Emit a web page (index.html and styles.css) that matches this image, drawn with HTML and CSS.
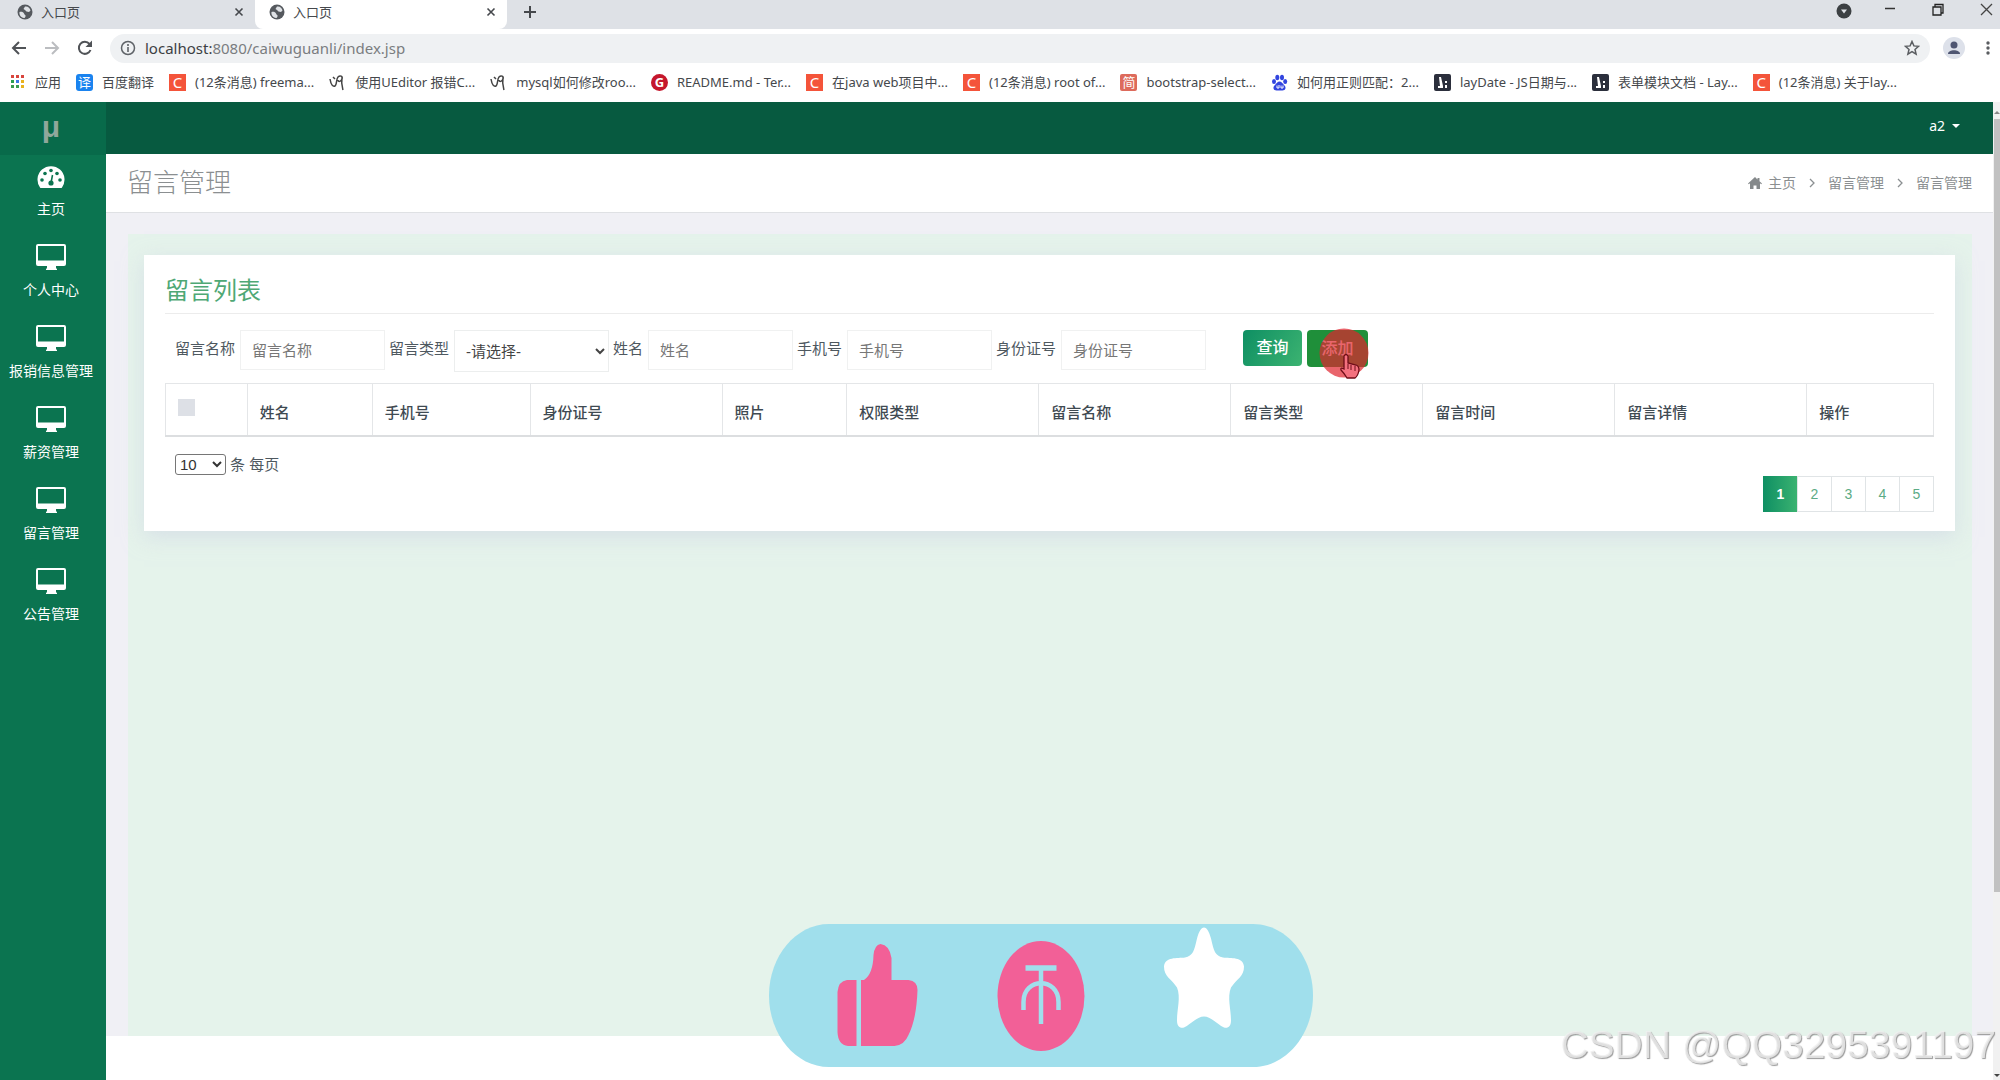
FILE: index.html
```html
<!DOCTYPE html>
<html lang="zh-CN">
<head>
<meta charset="utf-8">
<title>入口页</title>
<link rel="stylesheet" href="styles.css">
</head>
<body>
<svg class="defs" aria-hidden="true">
  <symbol id="globe" viewBox="0 0 16 16"><circle cx="8" cy="8" r="7.500" fill="#55595e"/><path d="M2.500 8c2-.5 4 0 4.500 1.500S9 11 8.500 12.500 7.500 14 7 14C4 13.500 2 11 2.500 8zM8 2.500c3-.5 5 1.500 5.500 4L12 8l-2.500-.5L8 6 6.500 5z" fill="#dfe2e6"/></symbol>
  <symbol id="close" viewBox="0 0 10 10"><path d="M1.500 1.500l7 7m0-7l-7 7" stroke="#45484c" stroke-width="1.600" fill="none"/></symbol>
  <symbol id="script" viewBox="0 0 17 17"><path d="M1 5c1 6 3 8 5 7s1-7 3-9 5-1 4 2-4 3-4 1m4-2c-1 5 0 8 1 12M4 3l2 2" stroke="#444" stroke-width="1.500" fill="none"/></symbol>
  <symbol id="monitor" viewBox="0 0 30 26"><path fill-rule="evenodd" d="M2 0h26a2 2 0 0 1 2 2v18a2 2 0 0 1-2 2h-8v1.500a2 2 0 0 0 1 1.500v1H10v-1a2 2 0 0 0 1-1.500V22H2a2 2 0 0 1-2-2V2a2 2 0 0 1 2-2zm0 2v14.500h26V2z" fill="currentColor"/></symbol>
</svg>
<div class="window">
  <header class="chrome">
    <div class="tabs">
      <div class="tab"><svg class="fav"><use href="#globe"/></svg><span>入口页</span><button class="bare" aria-label="关闭"><svg class="x"><use href="#close"/></svg></button></div>
      <div class="tab tab-on"><svg class="fav"><use href="#globe"/></svg><span>入口页</span><button class="bare" aria-label="关闭"><svg class="x"><use href="#close"/></svg></button></div>
      <button class="bare plus" aria-label="新标签页"><svg width="14" height="14"><path d="M7 1v12M1 7h12" stroke="#45484c" stroke-width="2"/></svg></button>
      <div class="winctl">
        <button class="bare search" aria-label="搜索标签页"><svg width="16" height="16"><circle cx="8" cy="8" r="7.500" fill="#3c4043"/><path d="M5 6.500h6L8 10.500z" fill="#dee1e6"/></svg></button>
        <button class="bare" aria-label="最小化"><svg width="12" height="12"><path d="M1 5.500h10" stroke="#333" stroke-width="1.500"/></svg></button>
        <button class="bare" aria-label="还原"><svg width="12" height="14" fill="none" stroke="#222" stroke-width="1.300"><path d="M1 4h8v8H1zM3 4V1.500h8V10H9"/></svg></button>
        <button class="bare" aria-label="关闭窗口"><svg width="13" height="13"><path d="M1 1l11 11m0-11L1 12" stroke="#444" stroke-width="1.300"/></svg></button>
      </div>
    </div>
    <div class="toolbar">
      <button class="bare" aria-label="后退"><svg width="16" height="16" fill="none" stroke="#505357" stroke-width="2"><path d="M15 8H2m6-6L2 8l6 6"/></svg></button>
      <button class="bare" aria-label="前进"><svg width="16" height="16" fill="none" stroke="#bbbdc0" stroke-width="2"><path d="M1 8h13M8 2l6 6-6 6"/></svg></button>
      <button class="bare" aria-label="刷新"><svg width="16" height="16"><path d="M13.500 10A6 6 0 1 1 12.500 4" fill="none" stroke="#505357" stroke-width="2"/><path d="M15 .500v6.500H8.500z" fill="#505357"/></svg></button>
      <div class="omnibox">
        <svg width="16" height="16"><circle cx="8" cy="8" r="6.500" fill="none" stroke="#5f6368" stroke-width="1.500"/><path d="M8 7v5M8 4v2" stroke="#5f6368" stroke-width="1.600"/></svg>
        <div class="url"><b>localhost:</b>8080/caiwuguanli/index.jsp</div>
        <svg width="16" height="16"><path d="M8 1.500l1.900 4.400 4.700.4-3.600 3.100 1.100 4.700L8 11.600l-4.100 2.500L5 9.400 1.400 6.300l4.700-.4z" fill="none" stroke="#5a5d61" stroke-width="1.500"/></svg>
      </div>
      <button class="bare avatar" aria-label="用户"><svg width="22" height="22"><circle cx="11" cy="11" r="11" fill="#dde1ea"/><circle cx="11" cy="8" r="3.500" fill="#4f5672"/><path d="M5 17c0-5 12-5 12 0z" fill="#4f5672"/></svg></button>
      <button class="bare" aria-label="菜单"><svg width="4" height="16" fill="#5a5d61"><circle cx="2" cy="3" r="1.700"/><circle cx="2" cy="8" r="1.700"/><circle cx="2" cy="13" r="1.700"/></svg></button>
    </div>
    <nav class="bookmarks" aria-label="书签">
      <a href="#" class="mark"><svg width="16" height="16"><g fill="#d9453d"><path d="M1 1h3v3H1zM6 1h3v3H6zM11 1h3v3h-3z"/></g><path d="M1 6h3v3H1z" fill="#2e9e50"/><path d="M6 6h3v3H6z" fill="#3b78e7"/><path d="M11 6h3v3h-3z" fill="#e8b21d"/><path d="M1 11h3v3H1zM6 11h3v3H6z" fill="#3a9b50"/><path d="M11 11h3v3h-3z" fill="#e8b21d"/></svg>应用</a>
      <a href="#" class="mark"><i class="ico blue">译</i><span>百度翻译</span></a>
      <a href="#" class="mark"><i class="ico orange">C</i><span>(12条消息) freema...</span></a>
      <a href="#" class="mark"><svg class="ico"><use href="#script"/></svg><span>使用UEditor 报错C...</span></a>
      <a href="#" class="mark"><svg class="ico"><use href="#script"/></svg><span>mysql如何修改roo...</span></a>
      <a href="#" class="mark"><i class="ico red">G</i><span>README.md - Ter...</span></a>
      <a href="#" class="mark"><i class="ico orange">C</i><span>在java web项目中...</span></a>
      <a href="#" class="mark"><i class="ico orange">C</i><span>(12条消息) root of...</span></a>
      <a href="#" class="mark"><i class="ico brick">简</i><span>bootstrap-select...</span></a>
      <a href="#" class="mark"><svg class="ico" viewBox="0 0 17 17" fill="#3245df"><ellipse cx="3" cy="7.500" rx="2" ry="2.500"/><ellipse cx="6.300" cy="3.500" rx="2" ry="2.800"/><ellipse cx="11" cy="3.500" rx="2" ry="2.800"/><ellipse cx="14.200" cy="7.500" rx="2" ry="2.500"/><path d="M8.500 7.500c2 0 3 2 5 4s1 5-2 5H5.500c-3 0-4-3-2-5s3-4 5-4z"/><path d="M6 11.500v2.500h2v-3m2 .5V14h2v-2.500" stroke="#fff" fill="none"/></svg><span>如何用正则匹配：2...</span></a>
      <a href="#" class="mark"><svg class="ico" viewBox="0 0 17 17"><rect width="17" height="17" rx="2" fill="#2b2f3c"/><path d="M5 3h2l2 9v2H4v-2h2zM11 7h2v2h-2zM11 11h2v3h-2z" fill="#fff"/></svg><span>layDate - JS日期与...</span></a>
      <a href="#" class="mark"><svg class="ico" viewBox="0 0 17 17"><rect width="17" height="17" rx="2" fill="#2b2f3c"/><path d="M5 3h2l2 9v2H4v-2h2zM11 7h2v2h-2zM11 11h2v3h-2z" fill="#fff"/></svg><span>表单模块文档 - Lay...</span></a>
      <a href="#" class="mark"><i class="ico orange">C</i><span>(12条消息) 关于lay...</span></a>
    </nav>
  </header>

  <div class="page">
    <aside class="sidebar">
      <div class="logo">μ</div>
      <nav>
        <a href="#"><svg width="28" height="26" viewBox="0 0 28 26"><path d="M3 24.500A13.500 13.500 0 1 1 25 24.500q-.4.500-1 .500H4q-.6 0-1-.500z" fill="#fff"/><g fill="#0b7450"><circle cx="5" cy="17" r="1.800"/><circle cx="8" cy="10.500" r="1.800"/><circle cx="14" cy="7.500" r="1.800"/><circle cx="20" cy="10.500" r="1.800"/><circle cx="23" cy="17" r="1.800"/><circle cx="14" cy="20" r="2.600"/></g><path d="M14 20l1.500-8" stroke="#0b7450" stroke-width="1.500"/></svg>主页</a>
        <a href="#"><svg width="30" height="26"><use href="#monitor"/></svg>个人中心</a>
        <a href="#"><svg width="30" height="26"><use href="#monitor"/></svg>报销信息管理</a>
        <a href="#"><svg width="30" height="26"><use href="#monitor"/></svg>薪资管理</a>
        <a href="#"><svg width="30" height="26"><use href="#monitor"/></svg>留言管理</a>
        <a href="#"><svg width="30" height="26"><use href="#monitor"/></svg>公告管理</a>
      </nav>
    </aside>
    <div class="main">
      <div class="topbar"><button class="bare user">a2 <i class="caret"></i></button></div>
      <div class="titlebar">
        <h1>留言管理</h1>
        <nav class="crumbs" aria-label="面包屑">
          <a href="#"><svg width="14" height="12"><path d="M7 0l2.500 2.400V1h2v3.200L14 6.500l-.8.800L12 6.300V12H8.500V8.500h-3V12H2V6.300L.8 7.300 0 6.500z" fill="#85898b"/></svg>主页</a>
          <svg class="sep"><path d="M1 1l4 4-4 4" fill="none" stroke="#8b8f91" stroke-width="1.300"/></svg>
          <a href="#">留言管理</a>
          <svg class="sep"><path d="M1 1l4 4-4 4" fill="none" stroke="#8b8f91" stroke-width="1.300"/></svg>
          <span>留言管理</span>
        </nav>
      </div>
      <div class="content">
        <div class="panel">
          <section class="card">
            <h2>留言列表</h2>
            <form class="filter">
              <div class="field"><label for="f1">留言名称</label><input id="f1" type="text" placeholder="留言名称"></div>
              <div class="field"><label for="f2">留言类型</label><select id="f2"><option>-请选择-</option></select></div>
              <div class="field"><label for="f3">姓名</label><input id="f3" type="text" placeholder="姓名"></div>
              <div class="field"><label for="f4">手机号</label><input id="f4" type="text" placeholder="手机号"></div>
              <div class="field"><label for="f5">身份证号</label><input id="f5" type="text" placeholder="身份证号"></div>
              <div class="actions">
                <button type="button" class="btn query">查询</button>
                <div class="addwrap">
                  <button type="button" class="btn add">添加</button>
                  <svg class="pointer" width="50" height="54" viewBox="0 0 50 54"><circle cx="25" cy="25" r="24.500" fill="#e0242e" fill-opacity=".7"/><path d="M25 28q2-3 4 0v7l8 2q3 1 3 5-1 6-4 8H28q-3-5-6-8-1-3 3-1z" fill="#f4717f" stroke="#6e0d18" stroke-width="1.300"/><path d="M29 36v5m3-4v5m4-4v5" stroke="#6e0d18"/></svg>
                </div>
              </div>
            </form>
            <table>
              <colgroup><col class="c-check"><col class="c-small"><col class="c-id"><col class="c-wide"><col class="c-small"><col class="c-wide"><col class="c-wide"><col class="c-wide"><col class="c-wide"><col class="c-wide"><col></colgroup>
              <thead><tr><th><input type="checkbox" aria-label="全选"></th><th>姓名</th><th>手机号</th><th>身份证号</th><th>照片</th><th>权限类型</th><th>留言名称</th><th>留言类型</th><th>留言时间</th><th>留言详情</th><th>操作</th></tr></thead>
            </table>
            <div class="perpage"><select id="size"><option>10</option></select><label for="size">条 每页</label></div>
            <nav class="pages" aria-label="分页"><a href="#" class="on">1</a><a href="#">2</a><a href="#">3</a><a href="#">4</a><a href="#">5</a></nav>
          </section>
        </div>
      </div>
      <footer class="foot"></footer>
    </div>
    <div class="scroll"><i class="up"></i><div class="thumb"></div><i class="down"></i></div>
  </div>
</div>

<svg class="like" width="544" height="143" viewBox="0 0 544 143">
  <path d="M60 0H484C517 0 544 32 544 71.500S517 143 484 143H60C27 143 0 111 0 71.500S27 0 60 0z" fill="#a0dfec"/>
  <g fill="#f26097">
    <path d="M78 56h9.500v66H79q-10-1-10.500-14V68q1-11 9.500-12z"/>
    <path d="M92 56h3q9-6 9.500-25 1-10 7-11 9 1 11 14v22h17q9 1 9 10-1 29-9 45-4 10-14 11H92z"/>
    <ellipse cx="272" cy="72" rx="43.500" ry="55"/>
  </g>
  <g fill="none" stroke="#a0dfec"><path d="M256.500 44h31" stroke-width="5.500"/><path d="M272 44v56" stroke-width="4.500"/><path d="M254.500 86V78C254.500 53 289.500 53 289.500 78v8" stroke-width="4.500"/></g>
  <path d="M435 3.500c3 0 5 4 7 11 3 13 4 17 12 19 8 1 20-1 21 9 0 10-7 12-13 21-4 10 0 21 0 33 0 6-3 8-7 7-8-4-13-11-20-11s-12 7-20 11c-4 1-7-1-7-7 0-12 4-23 0-33-6-9-13-11-13-21 1-10 13-8 21-9 8-2 9-6 12-19 2-7 4-11 7-11z" fill="#fff"/>
</svg>
<div class="watermark">CSDN @QQ3295391197</div>
</body>
</html>
```
FILE: styles.css
```css
* { box-sizing: border-box; }
body { margin: 0; font-family: "Liberation Sans", "Noto Sans CJK SC", sans-serif; font-size: 15px; color: #4e585f; background: #fff; overflow-x: hidden; }
a { color: inherit; text-decoration: none; }
svg { display: block; flex: none; }
.defs { position: absolute; width: 0; height: 0; }
.bare { background: none; border: 0; padding: 0; color: inherit; font: inherit; display: block; }
.window { min-height: 100vh; display: flex; flex-direction: column; }

/* browser frame */
.chrome { font-family: "Noto Sans", "Noto Sans CJK SC", sans-serif; font-size: 13px; color: #45484c; }
.tabs { display: flex; height: 29px; background: #dee1e6; padding-left: 3px; }
.tab { width: 252px; display: flex; align-items: center; gap: 8px; padding: 0 11px 5px 14px; }
.tab span { flex: 1; line-height: 18px; }
.tab-on { background: #fff; border-radius: 0 0 8px 8px; }
.fav { width: 16px; height: 16px; }
.x { width: 10px; height: 10px; }
.plus { margin: 0 0 5px 16px; }
.winctl { display: flex; margin-left: auto; gap: 36px; padding: 3px 7px 0 0; align-items: flex-start; }
.search { margin-right: -4px; }
.toolbar { display: flex; align-items: center; gap: 17px; height: 38px; padding: 0 10px 0 11px; }
.omnibox { flex: 1; display: flex; align-items: center; gap: 9px; height: 29px; border-radius: 15px; background: #eff1f3; padding: 0 10px; margin-right: -4px; }
.url { flex: 1; font-size: 15px; line-height: 20px; color: #7a7d80; }
.url b { font-weight: 400; color: #3c4043; }
.avatar { margin-right: 4px; }
.bookmarks { display: flex; align-items: center; height: 35px; padding: 0 10px 5px; gap: 15px; font-size: 13px; line-height: 18px; white-space: nowrap; }
.mark { display: flex; align-items: center; gap: 9px; }
.ico { width: 17px; height: 17px; font-style: normal; color: #fff; text-align: center; line-height: 17px; flex: none; }
.blue { background: #1a83ef; border-radius: 3px; }
.orange { background: #f4543a; font-size: 15px; }
.red { background: #c5172c; border-radius: 50%; font-weight: 700; }
.brick { background: #dd6b5c; border-radius: 2px; }

/* application */
.page { flex: 1; display: flex; }
.sidebar { width: 106px; background: #0b7450; color: #fff; font-size: 14px; }
.logo { height: 53px; background: #086a4a; text-align: center; font-size: 30px; line-height: 50px; font-weight: 700; color: #8fa79b; padding-right: 4px; }
.sidebar a { display: flex; flex-direction: column; align-items: center; height: 81px; padding: 8px 4px 0 0; gap: 10px; line-height: 20px; white-space: nowrap; }
.main { flex: 1; min-width: 0; display: flex; flex-direction: column; }
.topbar { height: 52px; background: #075a40; color: #fff; display: flex; justify-content: flex-end; padding: 0 33px 5px 0; }
.user { display: flex; align-items: center; gap: 7px; font-size: 14px; font-family: "Noto Sans", sans-serif; }
.caret { border: 4px solid transparent; border-top-color: #fff; border-bottom: 0; }
.titlebar { height: 59px; background: #fff; border-bottom: 1px solid #dfe1e4; display: flex; align-items: center; justify-content: space-between; padding: 0 21px 0 21px; }
h1 { margin: 0; font-size: 26px; line-height: 36px; font-weight: 300; color: #8b8f91; }
.crumbs { display: flex; align-items: center; gap: 13px; font-size: 14px; line-height: 20px; color: #8b8f91; }
.crumbs a { display: flex; align-items: center; gap: 6px; }
.sep { width: 6px; height: 10px; }
.content { flex: 1; background: #f0f0f5; padding: 21px 21px 0 22px; display: flex; }
.panel { flex: 1; min-width: 0; background: #e5f3eb; padding: 21px 17px 21px 16px; }
.foot { height: 44px; background: #fff; }
.card { background: #fff; padding: 21px 21px 19px; box-shadow: 0 6px 20px rgba(205, 212, 228, .6); }
h2 { margin: 0 0 16px; padding-bottom: 7px; border-bottom: 1px solid #ececec; font-size: 24px; line-height: 30px; font-weight: 400; color: #4fa875; }
.filter { display: flex; align-items: flex-start; gap: 4px; padding-left: 10px; height: 53px; }
.field { display: flex; align-items: flex-start; gap: 5px; line-height: 38px; white-space: nowrap; }
.field input { width: 145px; height: 40px; border: 1px solid #f0f1f1; padding: 0 11px; font: inherit; background: #fff; }
.field input::placeholder { color: #777; opacity: 1; }
.field select { width: 155px; height: 42px; border: 1px solid #eceeee; background: #fff; font: inherit; color: #444; padding: 0 0 0 7px; }
.actions { display: flex; gap: 5px; margin-left: 33px; }
.btn { border: 0; border-radius: 4px; color: #fff; font: 500 16px/24px "Liberation Sans", "Noto Sans CJK SC", sans-serif; }
.query { width: 59px; height: 36px; background: linear-gradient(120deg, #0e8f63, #3cb371); padding: 0; }
.add { width: 61px; height: 37px; background: #1f8f3a; padding: 0; }
.addwrap { position: relative; }
.pointer { position: absolute; left: 12px; top: -2px; }
table { width: 100%; table-layout: fixed; border-collapse: collapse; }
.c-check { width: 4.63%; }
.c-small { width: 7.06%; }
.c-id { width: 8.93%; }
.c-wide { width: 10.86%; }
th { height: 52px; border: 1px solid #e4e6e8; border-bottom: 2px solid #dcdee0; text-align: left; vertical-align: bottom; padding: 0 12px 11px; font-size: 15px; line-height: 22px; font-weight: 500; color: #3f4a52; }
th input { appearance: none; display: block; width: 17px; height: 17px; margin: 0 0 8px; background: #dde0e6; }
.perpage { display: flex; align-items: center; gap: 4px; padding: 17px 0 0 10px; line-height: 22px; }
.perpage select { width: 51px; height: 21px; font: 15px/18px "Liberation Sans", sans-serif; border: 1px solid #767676; border-radius: 3px; background: #fff; color: #333; padding: 0; }
.pages { display: flex; justify-content: flex-end; }
.pages a { width: 35px; height: 36px; margin-left: -1px; border: 1px solid #e0e4e6; display: grid; place-items: center; font-size: 14px; color: #5cab85; }
.pages .on { border: 0; background: linear-gradient(90deg, #0e8f63, #3cb371); color: #fff; font-weight: 700; }
.scroll { width: 7px; background: #f1f1f1; display: flex; flex-direction: column; align-items: center; padding: 9px 0 3px; }
.thumb { width: 6px; height: 80%; background: #c1c1c1; margin: 5px 0 auto; }
.up { border: 3px solid transparent; border-bottom-color: #888; border-top: 0; }
.down { border: 3px solid transparent; border-top-color: #444; border-bottom: 0; }

/* floating overlays */
.like { position: fixed; left: 769px; bottom: 13px; }
.watermark { position: fixed; right: 4px; bottom: 11px; font: 39px/48px "Liberation Sans", sans-serif; color: rgba(240, 240, 240, .8); text-shadow: 1px 1px 1px #9a9a9a; white-space: nowrap; }
```
